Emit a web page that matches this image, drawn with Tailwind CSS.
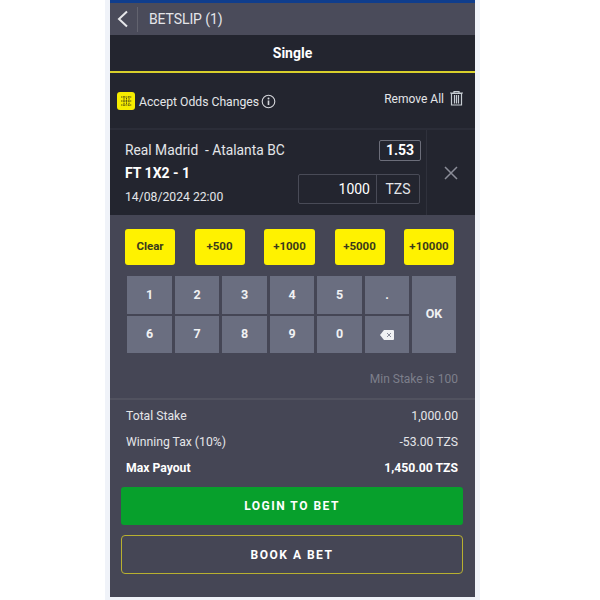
<!DOCTYPE html>
<html lang="en">
<head>
    <meta charset="UTF-8">
    <meta name="viewport" content="width=device-width, initial-scale=1.0">
    <title>Betslip</title>
    <script src="https://cdn.jsdelivr.net/npm/@tailwindcss/browser@4"></script>
</head>
<body class="bg-white font-['Roboto',sans-serif] antialiased">
<div class="w-[600px] h-[600px] overflow-hidden pl-[105px]">
    <div class="w-[375px] h-[600px] bg-[#f0f3f9] px-[5px]">
        <div class="w-[365px] h-[597px] bg-[#454655] flex flex-col text-white">
            <!-- header -->
            <div class="h-[3px] bg-[#0f3d8c]"></div>
            <div class="h-[32px] bg-[#4a4b5a] flex items-center">
                <div class="w-[28px] h-[25px] border-r border-[#62636f] flex items-center pl-[7px]">
                    <svg width="12" height="18" viewBox="0 0 12 18" fill="none" stroke="#e6e7ea" stroke-width="2"><path d="M10 1.5 2 9l8 7.5"/></svg>
                </div>
                <span class="ml-[11px] text-[14px] tracking-[-0.1px] text-[#e4e5e9]">BETSLIP (1)</span>
            </div>
            <!-- tab -->
            <div class="h-[38px] bg-[#23252f] border-b-2 border-[#d8d02c] flex items-center justify-center text-[14px] font-bold">Single</div>
            <!-- accept row -->
            <div class="h-[55px] bg-[#23252f] flex items-center justify-between pl-[7px] pr-[11px]">
                <div class="flex items-center mt-[2px]">
                    <div class="w-[18px] h-[18px] rounded-[3px] bg-[#f5ec00] flex items-center justify-center">
                        <svg width="13" height="12" viewBox="0 0 13 12" fill="none" stroke="#57530f" stroke-width="1" stroke-dasharray="1.5 0.7"><path d="M1 2h11M1 6h11M1 10h11M4 1v10M9 1v10M6.5 3v6"/></svg>
                    </div>
                    <span class="ml-[4px] mt-[2px] text-[12.2px] text-[#e4e5e9]">Accept Odds Changes</span>
                    <svg class="ml-[2px]" width="15" height="15" viewBox="0 0 15 15" fill="none"><circle cx="7.5" cy="7.5" r="6.3" stroke="#d5d6db" stroke-width="1.1"/><path d="M7.5 6.5v4.5" stroke="#d5d6db" stroke-width="1.6"/><circle cx="7.5" cy="4.4" r="1" fill="#d5d6db"/></svg>
                </div>
                <div class="flex items-center gap-[5px] mb-[3px]">
                    <span class="text-[12px] text-[#e4e5e9]">Remove All</span>
                    <svg class="mb-[3px]" width="15" height="16" viewBox="0 0 15 16" fill="none" stroke="#c6ccd2"><path d="M1 3h13M5 3V1.5h5V3" stroke-width="1.2"/><path d="M2.5 3.5h10V15h-10z" stroke-width="1.2"/><path d="M5.5 5v8.5M7.5 5v8.5M9.5 5v8.5" stroke-width="1.2"/></svg>
                </div>
            </div>
            <!-- selection -->
            <div class="h-[87px] bg-[#23252f] border-t-2 border-[#2b2d38] flex">
                <div class="w-[317px] border-r border-[#2f313c] relative pl-[15px] pt-[11px]">
                    <div class="text-[13.8px] leading-[18px] text-[#e4e5e9]">Real Madrid&nbsp; - Atalanta BC</div>
                    <div class="text-[14px] leading-[18px] mt-[5px] font-bold">FT 1X2 - 1</div>
                    <div class="text-[12.2px] leading-[16px] mt-[7px] text-[#e4e5e9]">14/08/2024 22:00</div>
                    <div class="absolute top-[10px] right-[5px] w-[42px] h-[21px] border border-[#6c6e7a] rounded-[2px] flex items-center justify-center text-[14px] font-bold">1.53</div>
                    <div class="absolute top-[44px] right-[6px] w-[122px] h-[30px] border border-[#494b57] rounded-[2px] flex text-[14px]">
                        <div class="w-[78px] border-r border-[#494b57] flex items-center justify-end pr-[6px]">1000</div>
                        <div class="flex-1 flex items-center justify-center text-[#e4e5e9]">TZS</div>
                    </div>
                </div>
                <div class="flex-1 flex items-center justify-center">
                    <svg width="14" height="14" viewBox="0 0 14 14" stroke="#8b8d98" stroke-width="1.5"><path d="M1 1l12 12M13 1 1 13"/></svg>
                </div>
            </div>
            <!-- quick stake -->
            <div class="flex justify-between pl-[15px] pr-[21px] mt-[14px] text-[11.5px] font-bold text-[#3b3a1c]">
                <button class="w-[50px] h-[36px] bg-[#fff200] rounded-[3px]">Clear</button>
                <button class="w-[50px] h-[36px] bg-[#fff200] rounded-[3px]">+500</button>
                <button class="w-[51px] h-[36px] bg-[#fff200] rounded-[3px]">+1000</button>
                <button class="w-[50px] h-[36px] bg-[#fff200] rounded-[3px]">+5000</button>
                <button class="w-[50px] h-[36px] bg-[#fff200] rounded-[3px]">+10000</button>
            </div>
            <!-- keypad -->
            <div class="grid grid-cols-[45px_44px_45px_44px_45px_44px_44px] grid-rows-[38px_37px] gap-x-[3px] gap-y-[2px] ml-[17px] mt-[11px] text-[12.5px] font-bold text-[#f0f1f3]">
                <div class="bg-[#6a6e80] flex items-center justify-center">1</div>
                <div class="bg-[#6a6e80] flex items-center justify-center">2</div>
                <div class="bg-[#6a6e80] flex items-center justify-center">3</div>
                <div class="bg-[#6a6e80] flex items-center justify-center">4</div>
                <div class="bg-[#6a6e80] flex items-center justify-center">5</div>
                <div class="bg-[#6a6e80] flex items-center justify-center">.</div>
                <div class="row-span-2 bg-[#6a6e80] flex items-center justify-center">OK</div>
                <div class="bg-[#6a6e80] flex items-center justify-center">6</div>
                <div class="bg-[#6a6e80] flex items-center justify-center">7</div>
                <div class="bg-[#6a6e80] flex items-center justify-center">8</div>
                <div class="bg-[#6a6e80] flex items-center justify-center">9</div>
                <div class="bg-[#6a6e80] flex items-center justify-center">0</div>
                <div class="bg-[#6a6e80] flex items-center justify-center">
                    <svg width="14" height="10" viewBox="0 0 14 10"><path d="M4 0h9a1 1 0 0 1 1 1v8a1 1 0 0 1-1 1H4L0 5z" fill="#f0f1f3"/><path d="M7 3l4 4M11 3 7 7" stroke="#8a8d9b" stroke-width="1"/></svg>
                </div>
            </div>
            <div class="text-right text-[12px] text-[#7d7f8b] pr-[17px] mt-[18px] leading-[16px]">Min Stake is 100</div>
            <!-- totals -->
            <div class="mt-[11px] border-t-2 border-[#51525f] pl-[16px] pr-[17px] pt-[8px] text-[12.2px] text-[#e4e5e9]">
                <div class="flex justify-between leading-[16px]"><span>Total Stake</span><span>1,000.00</span></div>
                <div class="flex justify-between leading-[16px] mt-[10px]"><span>Winning Tax (10%)</span><span>-53.00 TZS</span></div>
                <div class="flex justify-between leading-[16px] mt-[10px] font-bold text-white"><span>Max Payout</span><span>1,450.00 TZS</span></div>
            </div>
            <div class="ml-[11px] mr-[12px] mt-[11px] h-[38px] bg-[#07a02c] rounded-[3px] flex items-center justify-center text-[12px] font-bold tracking-[1.5px]">LOGIN TO BET</div>
            <div class="ml-[11px] mr-[12px] mt-[10px] h-[39px] border border-[#b8b030] rounded-[4px] flex items-center justify-center text-[12px] font-bold tracking-[1.5px]">BOOK A BET</div>
        </div>
    </div>
</div>
</body>
</html>
